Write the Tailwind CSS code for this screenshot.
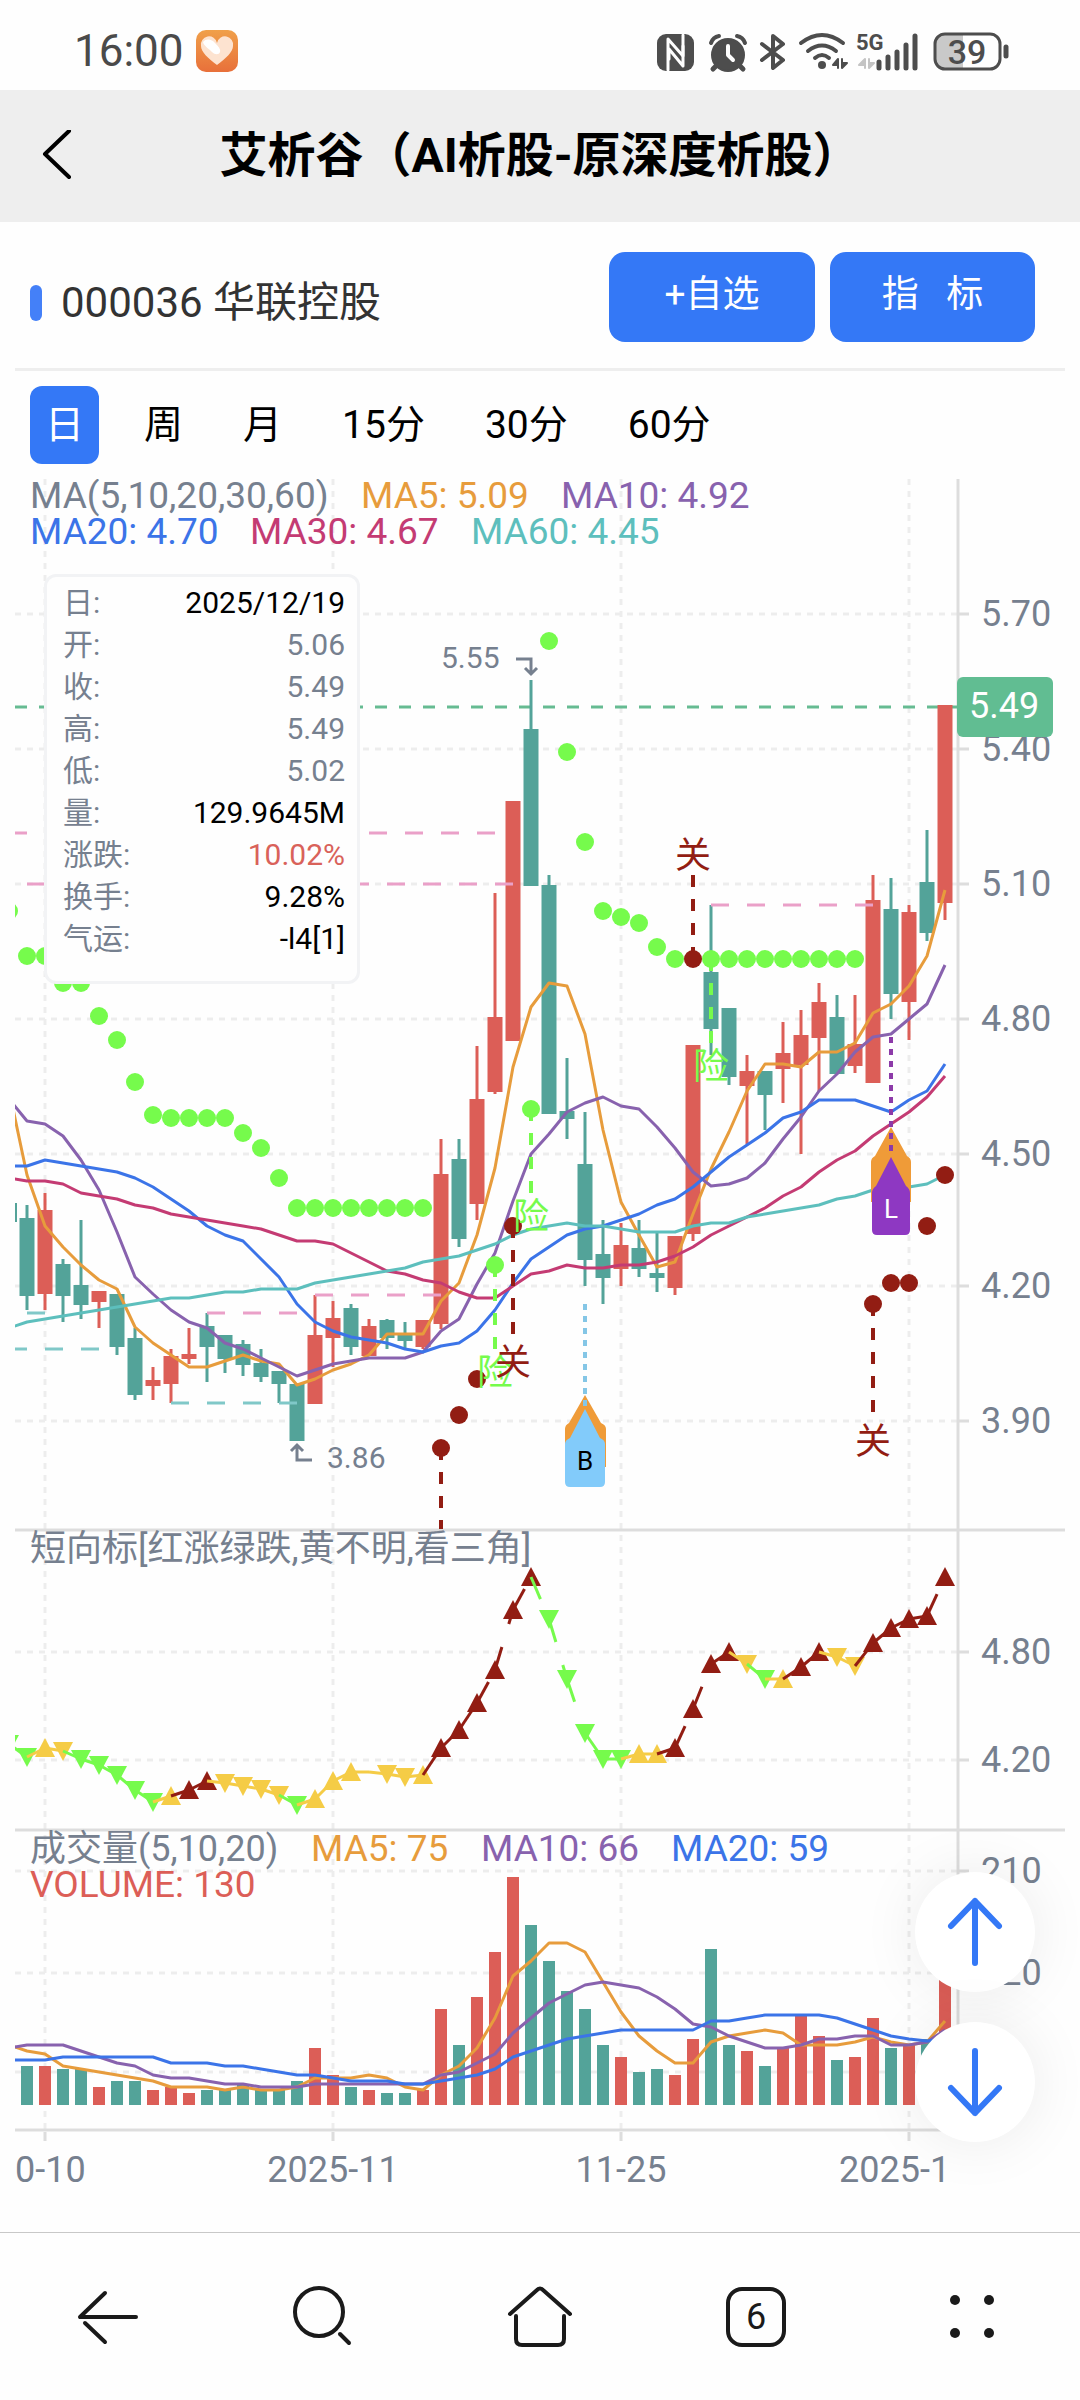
<!DOCTYPE html>
<html lang="zh-CN">
<head>
    <meta charset="UTF-8">
    <meta name="viewport" content="width=device-width, initial-scale=1.0">
    <title>艾析谷（AI析股-原深度析股）</title>
    <script src="https://cdn.jsdelivr.net/npm/@tailwindcss/browser@4"></script>
</head>
<body class="flex min-h-screen flex-col bg-[#fefefe] font-['Roboto','Noto_Sans_CJK_SC',sans-serif] text-black">
    <!-- Status Bar -->
    <div class="flex h-[90px] items-center justify-between pt-3 pr-[50px] pl-[74px]">
        <div class="flex items-center gap-3">
            <span class="text-[44px] leading-none text-[#4a4a4a]">16:00</span>
            <svg class="h-[42px] w-[42px]" viewBox="0 0 42 42">
                <defs>
                    <linearGradient id="appBg" x1="0" y1="0" x2="0" y2="1">
                        <stop offset="0" stop-color="#f0a04a" />
                        <stop offset="1" stop-color="#e8703a" />
                    </linearGradient>
                </defs>
                <rect width="42" height="42" rx="10" fill="url(#appBg)" />
                <path d="M21 35C12 28 5 22 5 16a7.500 7.500 0 0 1 16-3a7.500 7.500 0 0 1 16 3c0 6-7 12-16 19z" fill="#fde3d0" />
                <path d="M7 12c3-4 9-3 12 1c3 3 6 6 5 9s-5 3-8 0c-4-4-8-6-9-10z" fill="#fff" />
            </svg>
        </div>
        <svg class="h-[60px] w-[390px]" viewBox="0 0 390 60" fill="none" stroke="#4d4d4d" stroke-linecap="round" stroke-linejoin="round">
            <!-- nfc -->
            <rect x="17" y="13" width="37" height="37" rx="9" fill="#4d4d4d" stroke="none" />
            <path d="M28 49V18L43 35V25" stroke="#fefefe" stroke-width="3" />
            <path d="M43 14V45L29 28V38" stroke="#fefefe" stroke-width="3" />
            <!-- alarm -->
            <circle cx="88" cy="34" r="16" fill="#4d4d4d" stroke-width="2" />
            <path d="M71 22q2-6 8-7M105 22q-2-6-8-7" stroke-width="4" />
            <path d="M77 44l-4 4M99 44l4 4" stroke-width="5" />
            <path d="M88 25v9l5 5" stroke="#fefefe" stroke-width="4" />
            <!-- bluetooth -->
            <path d="M122 23l21 16l-10 8V15l10 8l-21 16" stroke-width="4" />
            <!-- wifi -->
            <path d="M161 22q21-16 42 0" stroke-width="4" />
            <path d="M168 30q14-11 28 0" stroke-width="4" />
            <path d="M175 37q7-6 14 0" stroke-width="4" />
            <circle cx="182" cy="44" r="4" fill="#4d4d4d" stroke="none" />
            <path d="M198 47V38l-5 6h5M202 38v9l5-5h-5" stroke-width="2" fill="#4d4d4d" />
            <!-- signal -->
            <text x="216" y="29" font-size="22" font-weight="700" fill="#4d4d4d" stroke="none">5G</text>
            <path d="M225 47V38l-6 6h6M229 38v9l5-5h-5" stroke="#c4c4c4" stroke-width="2" fill="#c4c4c4" />
            <path d="M239 47v-6M248 47V36M257 47V31M266 47V24M275 47V15" stroke-width="5" />
            <!-- battery -->
            <path d="M303 14h20v34h-20q-7 0-7-8V22q0-8 7-8z" fill="#c9c9c9" stroke="none" />
            <rect x="295" y="13" width="65" height="35" rx="10" stroke-width="3" />
            <path d="M366 26v9" stroke-width="5" />
            <text x="327" y="43" font-size="34" font-weight="500" text-anchor="middle" fill="#4d4d4d" stroke="none">39</text>
        </svg>
    </div>

    <!-- Title Bar -->
    <header class="relative flex h-[132px] items-center justify-center bg-[#eeeeee]">
        <button aria-label="返回" class="absolute left-8 p-2">
            <svg class="h-[52px] w-[36px]" viewBox="0 0 36 52" fill="none" stroke="#000" stroke-width="4" stroke-linecap="round" stroke-linejoin="round">
                <path d="M29 1L5 24L29 47" />
            </svg>
        </button>
        <h1 class="text-[48px] leading-none font-bold">艾析谷（AI析股-原深度析股）</h1>
    </header>

    <main class="flex-1">
        <!-- Stock Name and Actions -->
        <section class="mx-[15px] flex h-[149px] items-center justify-between border-b-3 border-[#eeeeee] pt-1 pr-[30px] pl-[15px]">
            <div class="flex items-center gap-[19px] pt-3">
                <span class="h-9 w-3 rounded-full bg-[#4480f8]"></span>
                <h2 class="text-[42px] leading-none text-[#333333]">000036 华联控股</h2>
            </div>
            <div class="flex gap-[15px]">
                <button class="h-[90px] w-[206px] rounded-2xl bg-[#3478f6] pb-1 text-[37px] text-white">+自选</button>
                <button class="h-[90px] w-[205px] rounded-2xl bg-[#3478f6] pb-1 text-[37px] text-white">指&nbsp;&nbsp;&nbsp;标</button>
            </div>
        </section>

        <!-- Period Tabs -->
        <nav class="flex gap-[30px] px-[30px] py-[15px] text-[39px]">
            <button class="h-[78px] rounded-xl bg-[#3478f6] px-[15px] text-white">日</button>
            <button class="h-[78px] px-[15px]">周</button>
            <button class="h-[78px] px-[15px]">月</button>
            <button class="h-[78px] px-[15px]">15分</button>
            <button class="h-[78px] px-[15px]">30分</button>
            <button class="h-[78px] px-[15px]">60分</button>
        </nav>

        <!-- Chart -->
        <section class="relative">
            <svg id="chart" class="block w-full" viewBox="0 479 1080 1741">
                <defs>
                    <clipPath id="plot"><rect x="15" y="479" width="944" height="1700" /></clipPath>
                </defs>
                <g id="grid"></g>
                <g id="plotArea" clip-path="url(#plot)"></g>
                <g id="labels"></g>
            </svg>

            <!-- Tooltip -->
            <dl class="absolute top-[95px] left-11 grid w-[316px] grid-cols-[auto_1fr] rounded-xl border-3 border-[#f2f3f5] bg-[#fefefe] pt-[5px] pr-3 pb-[21px] pl-4 text-[30px] leading-[42px] text-[#76808f]">
                <dt>日:</dt><dd class="text-right text-black">2025/12/19</dd>
                <dt>开:</dt><dd class="text-right">5.06</dd>
                <dt>收:</dt><dd class="text-right">5.49</dd>
                <dt>高:</dt><dd class="text-right">5.49</dd>
                <dt>低:</dt><dd class="text-right">5.02</dd>
                <dt>量:</dt><dd class="text-right text-black">129.9645M</dd>
                <dt>涨跌:</dt><dd class="text-right text-[#d9625a]">10.02%</dd>
                <dt>换手:</dt><dd class="text-right text-black">9.28%</dd>
                <dt>气运:</dt><dd class="text-right text-black">-l4[1]</dd>
            </dl>

            <!-- Floating Buttons -->
            <div class="absolute right-[45px] bottom-[78px] flex flex-col gap-[30px]">
                <button aria-label="上一个" class="flex h-[120px] w-[120px] items-center justify-center rounded-full bg-white shadow-[0_0_60px_rgba(0,0,0,0.08)]">
                    <svg class="h-[72px] w-[60px]" viewBox="0 0 60 72" fill="none" stroke="#3478f6" stroke-width="6" stroke-linecap="round" stroke-linejoin="round"><path d="M30 67V5M6 30L30 5L54 30" /></svg>
                </button>
                <button aria-label="下一个" class="flex h-[120px] w-[120px] items-center justify-center rounded-full bg-white shadow-[0_0_60px_rgba(0,0,0,0.08)]">
                    <svg class="h-[72px] w-[60px]" viewBox="0 0 60 72" fill="none" stroke="#3478f6" stroke-width="6" stroke-linecap="round" stroke-linejoin="round"><path d="M30 5V67M6 42L30 67L54 42" /></svg>
                </button>
            </div>
        </section>
    </main>

    <!-- Bottom Navigation -->
    <nav class="grid h-[168px] grid-cols-5 place-items-center border-t border-[#c8c8c8]">
        <a href="#" aria-label="后退">
            <svg class="h-[72px] w-[72px]" viewBox="0 0 72 72" fill="none" stroke="#1a1a1a" stroke-width="4" stroke-linecap="round" stroke-linejoin="round">
                <path d="M33 12L8 36H64M13 42L33 61" />
            </svg>
        </a>
        <a href="#" aria-label="搜索">
            <svg class="h-[72px] w-[72px]" viewBox="0 0 72 72" fill="none" stroke="#1a1a1a" stroke-width="4" stroke-linecap="round">
                <circle cx="31" cy="31" r="24" /><path d="M52 53L61 62" />
            </svg>
        </a>
        <a href="#" aria-label="主页">
            <svg class="h-[72px] w-[72px]" viewBox="0 0 72 72" fill="none" stroke="#1a1a1a" stroke-width="4" stroke-linecap="round" stroke-linejoin="round">
                <path d="M6 33L33 9Q36 6 39 9L66 33" /><path d="M12 35V58Q12 64 18 64H54Q60 64 60 58V35" />
            </svg>
        </a>
        <a href="#" aria-label="标签页" class="flex h-[60px] w-[60px] items-center justify-center rounded-2xl border-4 border-[#1a1a1a] text-[36px] leading-none text-[#1a1a1a]">6</a>
        <a href="#" aria-label="菜单">
            <svg class="h-[72px] w-[72px]" viewBox="0 0 72 72" fill="#1a1a1a">
                <circle cx="19" cy="19" r="5" /><circle cx="53" cy="19" r="5" /><circle cx="19" cy="52" r="5" /><circle cx="53" cy="52" r="5" />
            </svg>
        </a>
    </nav>

    <script>
        const RED = '#dc5e57', GREEN = '#53a399', LIME = '#76fb4c', DARK = '#921d13', YELLOW = '#f5cc46', GRAY = '#76808f';
        const ORANGE = '#e79c3c', PURPLE = '#8862ae', BLUE = '#3b74e8', ROSE = '#c43b73', TEAL = '#5dbfbd';
        const x = (i) => 27 + 18 * i;

        // colour, then y of high, body top, body bottom, low
        const candles = [
            ['g',1205,1218,1296,1310],['r',1193,1210,1294,1310],['g',1259,1264,1296,1322],['g',1220,1285,1305,1319],['r',1291,1291,1302,1328],
            ['g',1294,1294,1347,1355],['g',1328,1338,1395,1400],['r',1367,1380,1386,1400],['r',1349,1356,1384,1403],['r',1328,1354,1359,1364],
            ['g',1313,1326,1347,1382],['g',1335,1335,1359,1373],['g',1340,1344,1365,1376],['g',1349,1363,1377,1382],['g',1371,1371,1384,1403],
            ['g',1384,1384,1441,1441],['r',1295,1335,1404,1404],['r',1301,1318,1338,1367],['g',1304,1308,1347,1355],['r',1319,1326,1356,1356],
            ['g',1319,1320,1338,1349],['g',1322,1335,1341,1349],['r',1320,1320,1347,1349],['r',1139,1174,1324,1329],['g',1139,1159,1239,1247],
            ['r',1046,1099,1204,1220],['r',893,1017,1092,1094],['r',801,801,1041,1041],['g',680,729,886,886],['g',875,885,1114,1114],
            ['g',1058,1111,1119,1139],['g',1112,1164,1260,1286],['g',1220,1254,1278,1304],['r',1223,1245,1269,1286],['g',1220,1248,1269,1277],
            ['g',1232,1273,1278,1292],['r',1236,1236,1288,1295],['r',1045,1045,1234,1241],['g',905,972,1029,1055],['g',1008,1008,1077,1085],
            ['r',1055,1071,1086,1144],['g',1071,1071,1095,1130],['r',1022,1053,1069,1103],['r',1010,1035,1065,1154],['r',983,1002,1038,1091],
            ['g',995,1017,1074,1074],['r',995,1044,1066,1073],['r',875,900,1083,1083],['g',878,909,994,1019],['r',905,912,1002,1040],
            ['g',830,882,933,941],['r',705,705,903,920]
        ];
        const volumes = [2066,2066,2069,2069,2087,2081,2081,2090,2087,2093,2090,2090,2085,2090,2090,2081,2048,2075,2087,2090,2093,2093,2090,2009,2045,1997,1952,1877,1925,1961,1991,2009,2045,2057,2072,2069,2075,2039,1949,2045,2051,2066,2048,2015,2036,2060,2057,2018,2048,2045,2039,1962];

        // moving averages start one bar left of the visible range
        const ma = [
            [ORANGE, [1090,1175,1226,1247,1265,1280,1289,1327,1343,1355,1367,1367,1361,1355,1361,1364,1385,1379,1370,1364,1355,1334,1334,1334,1301,1283,1235,1168,1067,1007,983,986,1034,1130,1202,1235,1267,1262,1214,1169,1132,1091,1064,1064,1067,1052,1052,1043,1013,1004,986,956,890]],
            [PURPLE, [1099,1121,1124,1136,1160,1190,1232,1277,1294,1310,1322,1328,1343,1349,1358,1367,1376,1370,1364,1361,1358,1358,1358,1352,1331,1319,1284,1253,1201,1154,1134,1112,1103,1097,1106,1109,1127,1148,1172,1186,1184,1178,1163,1139,1117,1091,1074,1052,1037,1034,1019,1004,965]],
            [BLUE, [1166,1166,1160,1163,1166,1169,1172,1178,1187,1199,1211,1226,1235,1241,1259,1277,1304,1322,1331,1337,1340,1343,1349,1352,1346,1343,1331,1310,1283,1259,1247,1235,1229,1226,1220,1214,1205,1199,1187,1172,1157,1145,1133,1118,1112,1100,1100,1100,1106,1112,1100,1091,1064]],
            [ROSE, [1178,1181,1181,1184,1193,1196,1199,1205,1208,1214,1217,1220,1223,1226,1229,1235,1241,1241,1244,1253,1262,1271,1274,1280,1283,1292,1298,1298,1286,1274,1271,1265,1268,1268,1265,1265,1262,1256,1247,1235,1226,1217,1208,1196,1187,1172,1160,1151,1136,1124,1112,1097,1076]],
            [TEAL, [1328,1322,1319,1316,1313,1310,1307,1304,1301,1298,1298,1295,1292,1292,1289,1289,1289,1283,1280,1277,1274,1271,1268,1262,1259,1256,1250,1244,1235,1229,1226,1223,1226,1226,1229,1232,1232,1232,1226,1223,1223,1217,1214,1211,1208,1205,1199,1196,1190,1189,1187,1184,1175]]
        ];
        const volMa = [
            [ORANGE, [2045,2051,2054,2066,2069,2072,2075,2078,2081,2087,2087,2087,2090,2087,2090,2090,2087,2078,2078,2078,2075,2078,2087,2090,2075,2066,2048,2018,1976,1961,1943,1943,1952,1982,2012,2036,2051,2063,2063,2042,2036,2033,2030,2033,2045,2045,2045,2042,2037,2042,2045,2042,2021]],
            [PURPLE, [2048,2045,2045,2045,2051,2057,2063,2066,2075,2078,2078,2081,2084,2084,2087,2087,2087,2084,2084,2084,2084,2084,2084,2084,2075,2072,2063,2054,2033,2018,2003,1994,1985,1982,1985,1988,1997,2009,2024,2027,2036,2042,2048,2048,2045,2039,2039,2036,2036,2045,2045,2042,2030]],
            [BLUE, [2060,2060,2060,2057,2057,2057,2057,2057,2057,2063,2063,2063,2066,2066,2069,2072,2075,2075,2078,2081,2081,2081,2084,2084,2081,2078,2075,2069,2057,2051,2045,2039,2036,2033,2030,2030,2030,2030,2030,2021,2021,2018,2015,2015,2015,2015,2018,2024,2030,2036,2039,2041,2039]]
        ];

        // stop dots: [bar, y]
        const limeDots = [[-1,911],[0,956],[1,956],[2,983],[3,983],[4,1016],[5,1040],[6,1082],[7,1115],[8,1118],[9,1118],[10,1118],[11,1118],[12,1133],[13,1148],[14,1178],[15,1208],[16,1208],[17,1208],[18,1208],[19,1208],[20,1208],[21,1208],[22,1208],[26,1265],[28,1109],[29,641],[30,752],[31,842],[32,911],[33,917],[34,923],[35,947],[36,959],[38,959],[39,959],[40,959],[41,959],[42,959],[43,959],[44,959],[45,959],[46,959]];
        const darkDots = [[23,1448],[24,1415],[25,1379],[27,1226],[37,959],[47,1304],[48,1283],[49,1283],[50,1226],[51,1175]];

        // direction, colour, y
        const trend = [
            ['d','g',1744],['d','g',1757],['u','y',1748],['d','y',1751],['d','g',1759],['d','g',1765],['d','g',1775],['d','g',1790],['d','g',1802],['u','y',1796],['u','r',1790],['u','r',1781],['d','y',1783],['d','y',1786],['d','y',1789],['d','y',1795],['d','g',1805],['u','y',1799],['u','y',1781],['u','y',1772],['','y',1772],['d','y',1774],['d','y',1777],['u','y',1775],['u','r',1748],['u','r',1730],['u','r',1703],['u','r',1670],['u','r',1610],['u','r',1577],['d','g',1619],['d','g',1679],['d','g',1733],['d','g',1759],['d','g',1759],['u','y',1754],['u','y',1754],['u','r',1748],['u','r',1709],['u','r',1664],['u','r',1652],['d','y',1664],['d','g',1679],['u','y',1679],['u','r',1667],['u','r',1652],['d','y',1657],['d','y',1666],['u','r',1643],['u','r',1628],['u','r',1619],['u','r',1616],['u','r',1577]
        ];

        function line(x1, y1, x2, y2, color, width, dash) {
            return `<line x1="${x1}" y1="${y1}" x2="${x2}" y2="${y2}" stroke="${color}" stroke-width="${width}" ${dash ? `stroke-dasharray="${dash}"` : ''}/>`;
        }
        function text(tx, ty, str, color, size = 36, anchor = 'start') {
            return `<text x="${tx}" y="${ty}" fill="${color}" font-size="${size}" text-anchor="${anchor}">${str}</text>`;
        }
        function curves(list) {
            return list.map(([color, ys]) => `<polyline points="${ys.map((y, i) => x(i - 1) + ',' + y).join(' ')}" fill="none" stroke="${color}" stroke-width="3" stroke-linejoin="round"/>`).join('');
        }
        function dots(list, color) {
            return list.map(([i, y]) => `<circle cx="${x(i)}" cy="${y}" r="9" fill="${color}"/>`).join('');
        }

        // grid and axes
        let grid = '';
        const ticks = [[614,'5.70'],[749,'5.40'],[884,'5.10'],[1019,'4.80'],[1154,'4.50'],[1286,'4.20'],[1421,'3.90'],[1652,'4.80'],[1760,'4.20'],[1871,'210'],[1973,'120'],[2072,'']];
        [45, 333, 621, 909].forEach((gx) => {
            grid += line(gx, 479, gx, 2130, '#ededed', 3, '6 6') + line(gx, 2132, gx, 2141, '#dddddd', 3);
        });
        ticks.forEach(([y]) => {
            grid += line(15, y, 957, y, '#ededed', 3, '6 6') + line(958, y, 969, y, '#dddddd', 3);
        });
        grid += line(958, 479, 958, 2130, '#dddddd', 3);
        grid += line(15, 1530, 1065, 1530, '#dddddd', 3) + line(15, 1830, 1065, 1830, '#dddddd', 3) + line(15, 2130, 960, 2130, '#dddddd', 3);
        document.getElementById('grid').innerHTML = grid;

        // price pane
        let plot = line(15, 707, 958, 707, '#66bb92', 3, '12 12');
        plot += `<rect x="2" y="1203" width="15" height="19" fill="${GREEN}"/>`;
        candles.forEach(([c, high, top, bottom, low], i) => {
            const color = c === 'r' ? RED : GREEN;
            plot += line(x(i), high, x(i), low, color, 3) + `<rect x="${x(i) - 7.5}" y="${top}" width="15" height="${bottom - top}" fill="${color}"/>`;
        });
        plot += curves(ma);
        [[9,495,833],[27,513,884],[207,297,1313],[315,441,1295],[711,873,905]].forEach(([a, b, y]) => plot += line(a, y, b, y, '#eaa0c8', 3, '18 18'));
        [[27,45,1313],[9,99,1349],[171,297,1403]].forEach(([a, b, y]) => plot += line(a, y, b, y, '#80c8c8', 3, '18 18'));
        plot += dots(limeDots, LIME);
        plot += dots(darkDots, DARK);
        [[495,1265,1349],[531,1109,1195],[711,959,1045]].forEach(([a, y1, y2]) => plot += line(a, y1, a, y2, LIME, 4, '12 12'));
        [[441,1448,1529],[513,1226,1334],[693,875,959],[873,1304,1414]].forEach(([a, y1, y2]) => plot += line(a, y1, a, y2, DARK, 4, '12 12'));
        [[495,1385],[531,1229],[711,1079]].forEach(([a, y]) => plot += text(a, y, '险', LIME, 36, 'middle'));
        [[513,1375],[693,868],[873,1454]].forEach(([a, y]) => plot += text(a, y, '关', DARK, 36, 'middle'));

        // buy / sell flags
        plot += '<path d="M585 1395L601 1423Q606 1425 606 1429V1467H565V1429Q565 1425 569 1423Z" fill="#ef9b38"/>';
        plot += '<path d="M585 1409L600 1438Q605 1440 605 1444V1482Q605 1487 600 1487H570Q565 1487 565 1482V1444Q565 1440 570 1438Z" fill="#82cbfa"/>';
        plot += line(585, 1304, 585, 1409, '#84c6e6', 4, '6 6') + text(585, 1470, 'B', '#000', 26, 'middle');
        plot += '<path d="M891 1127L907 1156Q911 1158 911 1162V1202H871V1162Q871 1158 875 1156Z" fill="#ef9b38"/>';
        plot += '<path d="M891 1157L906 1186Q910 1189 910 1193V1230Q910 1235 905 1235H877Q872 1235 872 1230V1193Q872 1189 876 1186Z" fill="#8e38c2"/>';
        plot += line(891, 1037, 891, 1157, '#8c3aa8', 4, '6 6') + text(891, 1218, 'L', '#fff', 26, 'middle');

        // high / low callouts
        plot += text(441, 668, '5.55', GRAY, 30) + `<path d="M516 659H531V674M525 668L531 674L537 668" fill="none" stroke="${GRAY}" stroke-width="3"/>`;
        plot += text(327, 1468, '3.86', GRAY, 30) + `<path d="M312 1460H297V1445M291 1451L297 1445L303 1451" fill="none" stroke="${GRAY}" stroke-width="3"/>`;

        // trend pane
        const trendColor = { r: DARK, g: LIME, y: YELLOW };
        trend.forEach(([dir, c, y], i) => {
            const cx = x(i - 1), color = trendColor[c];
            if (dir === 'u') plot += `<path d="M${cx} ${y - 10}L${cx + 10} ${y + 9}H${cx - 10}Z" fill="${color}"/>`;
            if (dir === 'd') plot += `<path d="M${cx} ${y + 10}L${cx + 10} ${y - 9}H${cx - 10}Z" fill="${color}"/>`;
        });
        trend.forEach(([dir, c, y], i) => {
            if (i > 0) plot += line(x(i - 2), trend[i - 1][2], x(i - 1), y, trendColor[c], 3, '24 24');
        });

        // volume pane
        volumes.forEach((y, i) => {
            plot += `<rect x="${x(i) - 6}" y="${y}" width="12" height="${2105 - y}" fill="${candles[i][0] === 'r' ? RED : GREEN}"/>`;
        });
        plot += curves(volMa);
        document.getElementById('plotArea').innerHTML = plot;

        // legends and axis labels
        let labels = '';
        labels += text(30, 508, 'MA(5,10,20,30,60)', GRAY, 37) + text(361, 508, 'MA5: 5.09', ORANGE, 37) + text(561, 508, 'MA10: 4.92', PURPLE, 37);
        labels += text(30, 544, 'MA20: 4.70', BLUE, 37) + text(250, 544, 'MA30: 4.67', ROSE, 37) + text(471, 544, 'MA60: 4.45', TEAL, 37);
        labels += text(30, 1561, '短向标[红涨绿跌,黄不明,看三角]', GRAY);
        labels += text(30, 1861, '成交量(5,10,20)', GRAY) + text(311, 1861, 'MA5: 75', ORANGE, 37) + text(481, 1861, 'MA10: 66', PURPLE, 37) + text(671, 1861, 'MA20: 59', BLUE, 37);
        labels += text(30, 1897, 'VOLUME: 130', RED, 37);
        ticks.forEach(([y, str]) => labels += text(981, y + 12, str, GRAY));
        labels += '<rect x="957" y="677" width="96" height="60" rx="6" fill="#61bd92"/>' + text(969, 718, '5.49', '#fff');
        labels += text(15, 2182, '0-10', GRAY) + text(333, 2182, '2025-11', GRAY, 36, 'middle') + text(621, 2182, '11-25', GRAY, 36, 'middle') + text(839, 2182, '2025-1', GRAY);
        document.getElementById('labels').innerHTML = labels;
    </script>
</body>
</html>
